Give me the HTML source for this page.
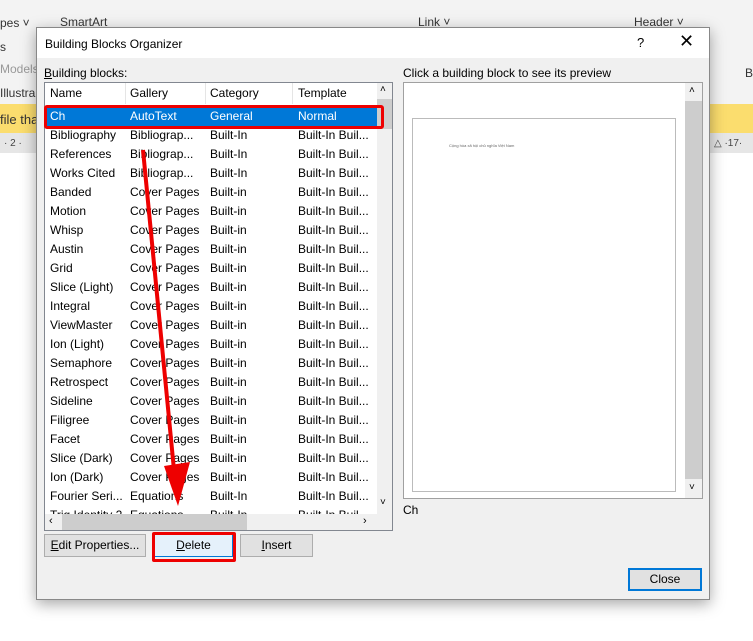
<!DOCTYPE html><html><head><style>
body{margin:0;width:753px;height:641px;position:relative;overflow:hidden;background:#fff;font-family:"Liberation Sans",sans-serif;font-size:12px;color:#000}
.a{position:absolute}
.row{position:absolute;left:0;height:19px;line-height:19px;width:332px}
.row span{position:absolute;white-space:nowrap}
.btn{position:absolute;background:#e1e1e1;border:1px solid #adadad;text-align:center;line-height:20px;box-sizing:border-box}
</style></head><body>
<div class="a" style="left:0;top:0;width:753px;height:104px;background:#f3f3f3"></div>
<div class="a" style="left:0;top:104px;width:753px;height:29px;background:#fbdd6e"></div>
<div class="a" style="left:0;top:133px;width:753px;height:20px;background:#e6e6e6"></div>
<div class="a" style="left:0;top:153px;width:753px;height:488px;background:#fff"></div>
<div class="a" style="left:0;top:16px;color:#333">pes ˅</div>
<div class="a" style="left:0;top:40px;color:#333">s</div>
<div class="a" style="left:0;top:62px;color:#999">Models</div>
<div class="a" style="left:0;top:86px;color:#333">Illustra</div>
<div class="a" style="left:0;top:112px;color:#333;font-size:13px">file that</div>
<div class="a" style="left:4px;top:138px;color:#444;font-size:10px">· 2 ·</div>
<div class="a" style="left:60px;top:15px;color:#333">SmartArt</div>
<div class="a" style="left:418px;top:15px;color:#333">Link ˅</div>
<div class="a" style="left:634px;top:15px;color:#333">Header ˅</div>
<div class="a" style="left:714px;top:138px;color:#444;font-size:10px">△ ·17·</div>
<div class="a" style="left:745px;top:66px;color:#333">B</div>

<div class="a" style="left:36px;top:27px;width:672px;height:571px;background:#f0f0f0;border:1px solid #888;box-shadow:0 4px 14px rgba(0,0,0,.35)">
<div class="a" style="left:0;top:0;width:672px;height:30px;background:#fff"></div>
<div class="a" style="left:8px;top:9px">Building Blocks Organizer</div>
<div class="a" style="left:600px;top:7px;font-size:13px">?</div>
<div class="a" style="left:642px;top:3px;font-size:18px">✕</div>
<div class="a" style="left:7px;top:38px"><u>B</u>uilding blocks:</div>
<div class="a" style="left:366px;top:38px">Click a building block to see its preview</div>
<div class="a" style="left:7px;top:54px;width:347px;height:447px;background:#fff;border:1px solid #828790">
 <div class="a" style="left:0;top:0;width:332px;height:21px;line-height:21px">
  <span class="a" style="left:5px">Name</span><span class="a" style="left:85px">Gallery</span><span class="a" style="left:165px">Category</span><span class="a" style="left:253px">Template</span>
  <div class="a" style="left:80px;top:0;width:1px;height:21px;background:#e5e5e5"></div>
  <div class="a" style="left:160px;top:0;width:1px;height:21px;background:#e5e5e5"></div>
  <div class="a" style="left:247px;top:0;width:1px;height:21px;background:#e5e5e5"></div>
 </div>
 <div id="rows" class="a" style="left:0;top:24px;width:332px;height:407px;overflow:hidden"></div>
 <div class="a" style="left:332px;top:0;width:15px;height:431px;background:#f0f0f0"><div style="position:absolute;left:0;top:16px;width:15px;height:30px;background:#cdcdcd"></div><div style="position:absolute;left:3px;top:1px;font-size:10px">˄</div><div style="position:absolute;left:3px;top:414px;font-size:10px">˅</div></div>
 <div class="a" style="left:0;top:431px;width:347px;height:16px;background:#f0f0f0"><div style="position:absolute;left:17px;top:0;width:185px;height:16px;background:#cdcdcd"></div><div style="position:absolute;left:4px;top:1px;font-size:11px">‹</div><div style="position:absolute;left:318px;top:1px;font-size:11px">›</div></div>
</div>
<div class="a" style="left:366px;top:54px;width:298px;height:415px;background:#fff;border:1px solid #a0a0a0">
 <div class="a" style="left:281px;top:0;width:17px;height:415px;background:#f0f0f0"><div style="position:absolute;left:0;top:18px;width:17px;height:378px;background:#cdcdcd"></div><div style="position:absolute;left:4px;top:2px;font-size:10px">˄</div><div style="position:absolute;left:4px;top:399px;font-size:10px">˅</div></div>
 <div class="a" style="left:8px;top:35px;width:262px;height:372px;border:1px solid #bbb"></div>
 <div class="a" style="left:45px;top:60px;font-size:4px;color:#666">Cộng hòa xã hội chủ nghĩa Việt Nam</div>
</div>
<div class="a" style="left:366px;top:475px">Ch</div>
<div class="btn" style="left:7px;top:506px;width:102px;height:23px"><u>E</u>dit Properties...</div>
<div class="btn" style="left:117px;top:506px;width:79px;height:23px;background:#e5f1fb;border-color:#0078d7"><u>D</u>elete</div>
<div class="btn" style="left:203px;top:506px;width:73px;height:23px"><u>I</u>nsert</div>
<div class="btn" style="left:591px;top:540px;width:74px;height:23px;border:2px solid #0078d7;line-height:19px">Close</div>
</div>
<div class="a" style="left:44px;top:105px;width:334px;height:18px;border:3px solid #e00;border-radius:3px"></div>
<div class="a" style="left:152px;top:532px;width:78px;height:24px;border:3px solid #e00;border-radius:2px"></div>
<svg class="a" style="left:0;top:0" width="753" height="641"><line x1="143" y1="150" x2="174" y2="470" stroke="#e00" stroke-width="4"/><polygon points="164,466 190,462 178,506" fill="#e00"/></svg>
<script>
var d=[["Ch","AutoText","General","Normal"],["Bibliography","Bibliograp...","Built-In","Built-In Buil..."],["References","Bibliograp...","Built-In","Built-In Buil..."],["Works Cited","Bibliograp...","Built-In","Built-In Buil..."],["Banded","Cover Pages","Built-in","Built-In Buil..."],["Motion","Cover Pages","Built-in","Built-In Buil..."],["Whisp","Cover Pages","Built-in","Built-In Buil..."],["Austin","Cover Pages","Built-in","Built-In Buil..."],["Grid","Cover Pages","Built-in","Built-In Buil..."],["Slice (Light)","Cover Pages","Built-in","Built-In Buil..."],["Integral","Cover Pages","Built-in","Built-In Buil..."],["ViewMaster","Cover Pages","Built-in","Built-In Buil..."],["Ion (Light)","Cover Pages","Built-in","Built-In Buil..."],["Semaphore","Cover Pages","Built-in","Built-In Buil..."],["Retrospect","Cover Pages","Built-in","Built-In Buil..."],["Sideline","Cover Pages","Built-in","Built-In Buil..."],["Filigree","Cover Pages","Built-in","Built-In Buil..."],["Facet","Cover Pages","Built-in","Built-In Buil..."],["Slice (Dark)","Cover Pages","Built-in","Built-In Buil..."],["Ion (Dark)","Cover Pages","Built-in","Built-In Buil..."],["Fourier Seri...","Equations","Built-In","Built-In Buil..."],["Trig Identity 2","Equations","Built-In","Built-In Buil..."]];
var h="",x=[5,85,165,253];
d.forEach(function(r,i){h+='<div class="row" style="top:'+(i*19)+'px;'+(i==0?'background:#0078d7;color:#fff':'')+'">';r.forEach(function(c,j){h+='<span style="left:'+x[j]+'px">'+c+'</span>'});h+='</div>'});
document.getElementById("rows").innerHTML=h;
</script>
</body></html>
